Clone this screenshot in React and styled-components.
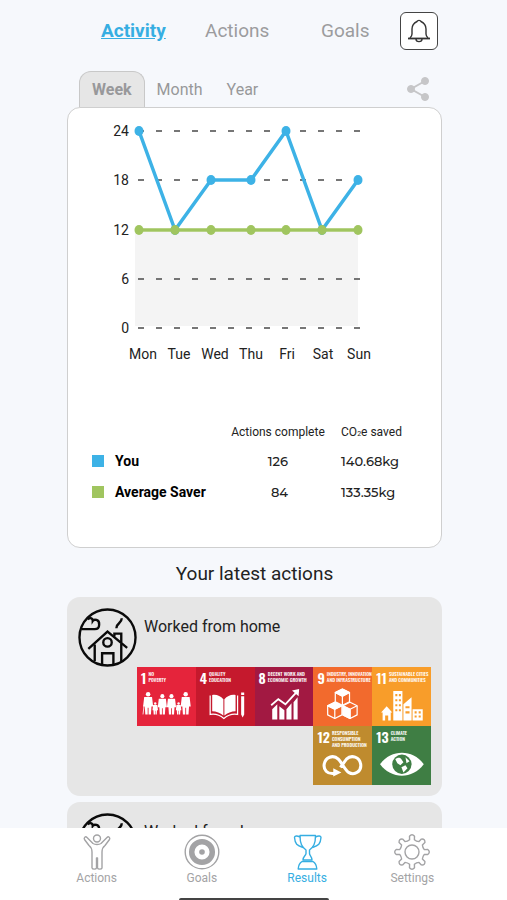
import { useState } from "react";
import styled, { createGlobalStyle } from "styled-components";

const days = ["Mon", "Tue", "Wed", "Thu", "Fri", "Sat", "Sun"];
const dayX = [51, 87, 123, 163, 198, 234, 270];
const levels = [24, 18, 12, 6, 0];

const you = [24, 12, 18, 18, 24, 12, 18];
const average = [12, 12, 12, 12, 12, 12, 12];

const goals = [
  { id: 1, color: "#e5243b", lines: ["NO", "POVERTY"], icon: <PovertyIcon /> },
  { id: 4, color: "#c5192d", lines: ["QUALITY", "EDUCATION"], icon: <BookIcon /> },
  { id: 8, color: "#a21942", lines: ["DECENT WORK AND", "ECONOMIC GROWTH"], icon: <GrowthIcon /> },
  { id: 9, color: "#f26a2d", lines: ["INDUSTRY, INNOVATION", "AND INFRASTRUCTURE"], icon: <CubesIcon /> },
  { id: 11, color: "#f89d2a", lines: ["SUSTAINABLE CITIES", "AND COMMUNITIES"], icon: <CityIcon /> },
  { id: 12, color: "#bf8b2e", lines: ["RESPONSIBLE", "CONSUMPTION", "AND PRODUCTION"], icon: <LoopIcon /> },
  { id: 13, color: "#3f7e44", lines: ["CLIMATE", "ACTION"], icon: <EyeIcon /> },
];

const actions = [
  { id: 1, title: "Worked from home", goals },
  { id: 2, title: "Worked from home", goals: [] },
];

const valueY = (value) => 205 - Math.round(value * 8.2);

function Series({ values, color }) {
  const points = values.map((v, i) => `${dayX[i]},${valueY(v)}`).join(" ");

  return (
    <g>
      <polyline points={points} fill="none" stroke={color} strokeWidth="3.5" strokeLinejoin="round" />
      {values.map((v, i) => (
        <ellipse key={i} cx={dayX[i]} cy={valueY(v)} rx="4.5" ry="5" fill={color} />
      ))}
    </g>
  );
}

function Chart() {
  return (
    <ChartSvg viewBox="0 0 290 242" role="img" aria-label="Actions this week">
      <rect x="47" y="109" width="223" height="94" fill="#f4f4f4" />
      {levels.map((level) => (
        <g key={level}>
          <line x1="50" x2="273" y1={valueY(level)} y2={valueY(level)} stroke="#4a4a4a" strokeWidth="1.6" strokeDasharray="6 12" />
          <AxisText x="41" y={valueY(level) + 5} textAnchor="end">{level}</AxisText>
        </g>
      ))}
      <Series values={you} color="#3db2e6" />
      <Series values={average} color="#a0c55f" />
      {days.map((day, i) => (
        <AxisText key={day} x={55 + i * 36} y="236" textAnchor="middle">{day}</AxisText>
      ))}
    </ChartSvg>
  );
}

function ActionCard({ action }) {
  return (
    <Action>
      <ActionHead>
        <HomeIcon />
        <ActionTitle>{action.title}</ActionTitle>
      </ActionHead>
      <GoalTiles>
        {action.goals.map((goal) => (
          <GoalTile key={goal.id} $color={goal.color}>
            <GoalHead>
              <GoalNumber>{goal.id}</GoalNumber>
              <GoalName>
                {goal.lines.map((line) => (
                  <div key={line}>{line}</div>
                ))}
              </GoalName>
            </GoalHead>
            {goal.icon}
          </GoalTile>
        ))}
      </GoalTiles>
    </Action>
  );
}

const navItems = [
  { name: "Actions", icon: <PersonIcon /> },
  { name: "Goals", icon: <TargetIcon /> },
  { name: "Results", icon: <TrophyIcon /> },
  { name: "Settings", icon: <GearIcon /> },
];

function App() {
  const [section, setSection] = useState("Activity");
  const [period, setPeriod] = useState("Week");

  return (
    <Screen>
      <GlobalStyle />
      <Content>
        <TopBar>
          {["Activity", "Actions", "Goals"].map((name) => (
            <SectionButton key={name} $active={section === name} onClick={() => setSection(name)}>
              {name}
            </SectionButton>
          ))}
          <BellButton aria-label="Notifications">
            <BellIcon />
          </BellButton>
        </TopBar>

        <PeriodBar>
          {["Week", "Month", "Year"].map((name) => (
            <PeriodButton key={name} $active={period === name} onClick={() => setPeriod(name)}>
              {name}
            </PeriodButton>
          ))}
          <ShareButton aria-label="Share">
            <ShareIcon />
          </ShareButton>
        </PeriodBar>

        <ChartCard>
          <Chart />
          <Summary>
            <thead>
              <tr>
                <NameCell as="td" />
                <CountHead>Actions complete</CountHead>
                <HeadCell>CO<SmallTwo>2</SmallTwo>e saved</HeadCell>
              </tr>
            </thead>
            <tbody>
              <tr>
                <NameCell scope="row"><Legend><Swatch $color="#3db2e6" />You</Legend></NameCell>
                <CountCell>126</CountCell>
                <ValueCell>140.68kg</ValueCell>
              </tr>
              <tr>
                <NameCell scope="row"><Legend><Swatch $color="#a0c55f" />Average Saver</Legend></NameCell>
                <CountCell>84</CountCell>
                <ValueCell>133.35kg</ValueCell>
              </tr>
            </tbody>
          </Summary>
        </ChartCard>

        <Heading>Your latest actions</Heading>
        <ActionList>
          {actions.map((action) => (
            <ActionCard key={action.id} action={action} />
          ))}
        </ActionList>
      </Content>

      <BottomNav>
        <NavItems>
          {navItems.map((item) => (
            <NavLink key={item.name} href="#" $active={item.name === "Results"}>
              {item.icon}
              {item.name}
            </NavLink>
          ))}
        </NavItems>
        <HomeIndicator />
      </BottomNav>
    </Screen>
  );
}

export default App;

function BellIcon() {
  return (
    <svg width="26" height="28" viewBox="0 0 26 28" fill="none" stroke="#333" strokeWidth="1.4">
      <path d="M2 21.5H24" strokeWidth="1.8" />
      <path d="M4 21C5 20 6 19 6 17V12C6 8 8 6 11 4.5C11.5 3 14.5 3 15 4.5C18 6 20 8 20 12V17C20 19 21 20 22 21" />
      <path d="M10 22C10 25.5 16 25.5 16 22" />
    </svg>
  );
}

function ShareIcon() {
  return (
    <svg width="24" height="26" viewBox="0 0 24 26" fill="#c6c6c8" stroke="#c6c6c8">
      <path d="M19 5L5 13L19 21" fill="none" strokeWidth="2" />
      <circle cx="19" cy="5" r="3.5" />
      <circle cx="5" cy="13" r="3.5" />
      <circle cx="19" cy="21" r="3.5" />
    </svg>
  );
}

function HomeIcon() {
  return (
    <svg width="59" height="59" viewBox="0 0 60 60" fill="none" stroke="#0a0a0a" strokeWidth="2.4">
      <circle cx="30" cy="30" r="28.5" />
      <path d="M10.5 41.5L30 24L50 40.5" />
      <path d="M17 37V54M44 36V54.5M37 29V26H44V35" />
      <circle cx="30" cy="35" r="4.3" />
      <path d="M24.5 58V46H36V58" />
      <path d="M10 11.5C13 9 15 11 15 13C16 11.5 22 11 21.5 17C21.5 20 20 21.5 17 21.5H4" />
      <path d="M44.5 10.5C44.5 16 39 15 39 20.5" />
    </svg>
  );
}

function PersonIcon() {
  return (
    <NavSvg>
      <circle cx="18" cy="4.5" r="3.5" />
      <path d="M13 34V18C13 15 12 13 10 11.5L5.5 5.5C4.5 3.5 6.5 2 8 3.5L14 9.5C16 10.8 20 10.8 22 9.5L28 3.5C29.5 2 31.5 3.5 30.5 5.5L26 11.5C24 13 23 15 23 18V34C22.5 35.5 19 35.5 18.5 34V24H17.5V34C17 35.5 13.5 35.5 13 34" />
    </NavSvg>
  );
}

function TargetIcon() {
  return (
    <NavSvg>
      <circle cx="18" cy="18" r="16.8" />
      <circle cx="18" cy="18" r="10.3" strokeWidth="5.5" />
      <circle cx="18" cy="18" r="2.8" fill="currentColor" stroke="none" />
    </NavSvg>
  );
}

function TrophyIcon() {
  return (
    <NavSvg>
      <path d="M11 1.5H26.5C26.5 10 24.5 13 20.5 16V19.5C20.5 21.5 23 22.5 23 26H14C14 22.5 17 21.5 17 19.5V16C13 13 11 10 11 1.5Z" />
      <path d="M11 3C8 1.5 5.5 1.8 5.5 3.5C6 10 8 11.5 14 13.5M26.5 3C29.5 1.5 32 1.8 32 3.5C31.5 10 29.5 11.5 23.5 13.5" />
      <path d="M13 27.5H24C26.5 29 27.5 31 27.8 35H9.2C9.5 31 10.5 29 13 27.5Z" />
    </NavSvg>
  );
}

function GearIcon() {
  const polar = (r, deg) => {
    const a = (deg * Math.PI) / 180;
    return `${(18 + r * Math.sin(a)).toFixed(1)} ${(18 - r * Math.cos(a)).toFixed(1)}`;
  };
  const teeth = Array.from({ length: 8 }, (_, i) => {
    const a = i * 45;
    return `${polar(12.5, a - 11)} L${polar(16, a - 9)} Q${polar(18.8, a)} ${polar(16, a + 9)} L${polar(12.5, a + 11)} Q${polar(11.5, a + 22)}`;
  });

  return (
    <NavSvg>
      <path d={`M${teeth.join(" ")} ${polar(12.5, -11)} Z`} />
      <circle cx="18" cy="18" r="7" />
    </NavSvg>
  );
}

function PovertyIcon() {
  const people = [[11, 1.1], [18, 0.6], [25, 1], [34, 1], [41, 0.6], [48, 1.1]];

  return (
    <TileSvg>
      {people.map(([x, s]) => (
        <g key={x} transform={`translate(${x} 46) scale(${s})`}>
          <circle cx="0" cy="-18" r="2" />
          <path d="M-3.5 -15.5H3.5L4.5 -7H3L2.5 0H0.4V-6H-0.4V0H-2.5L-3 -7H-4.5Z" />
        </g>
      ))}
      <path d="M7 37L6 46" stroke="#fff" strokeWidth="0.8" />
    </TileSvg>
  );
}

function BookIcon() {
  return (
    <TileSvg>
      <path d="M16 27C20 26 24 28 27 31V47C24 45 20 43 16 43Z" />
      <path d="M39 27C35 26 31 28 28 31V47C31 45 35 43 39 43Z" />
      <path d="M14 27.5V46C19 45 24 47 27.5 50C31 47 36 45 41 46V27.5" fill="none" stroke="#fff" strokeWidth="1.2" />
      <path d="M44.5 28H47.5V46L46 49L44.5 46ZM44.5 24.5H47.5V27H44.5Z" />
    </TileSvg>
  );
}

function GrowthIcon() {
  return (
    <TileSvg>
      <path d="M17 41L22 36V51H17ZM24 38L29 42V51H24ZM31 41L36 35V51H31ZM38 34L42 29V51H38Z" />
      <path d="M16 37L23 31L30 36L41 24" fill="none" stroke="#fff" strokeWidth="1.8" />
      <path d="M36.5 22.5L43.5 21L43 28Z" />
    </TileSvg>
  );
}

function CubesIcon() {
  return (
    <TileSvg>
      {[[29, 29], [21.5, 42], [36.5, 42]].map(([x, y], i) => (
        <g key={x} transform={`translate(${x} ${y})`} stroke="#fff" strokeWidth="1.2" strokeLinejoin="round">
          <path d="M0 -8L7 -4.5V4.5L0 8L-7 4.5V-4.5Z" fill="none" />
          <path d="M-7 -4.5L0 -1L7 -4.5M0 -1V8" fill="none" />
          {i < 2 && <path d="M0 -8L7 -4.5L0 -1L-7 -4.5Z" />}
          {i === 2 && <path d="M0 -1L-7 -4.5V4.5L0 8Z" />}
        </g>
      ))}
    </TileSvg>
  );
}

function CityIcon() {
  return (
    <TileSvg>
      <path d="M9 44L14.5 38L20 44H18.5V52H16V47H13V52H10.5V44Z" />
      <path fillRule="evenodd" d="M21 23H30V52H21ZM23 26V28H25V26ZM26.5 26V28H28.5V26ZM23 31V33H25V31ZM26.5 31V33H28.5V31ZM23 36V38H25V36ZM26.5 36V38H28.5V36ZM23 41V43H25V41ZM26.5 41V43H28.5V41Z" />
      <path fillRule="evenodd" d="M31 36L39 29V52H31ZM33 38V40H37V38ZM33 43V45H37V43Z" />
      <path fillRule="evenodd" d="M40 41H50V52H40ZM42 43V45H44V43ZM46 43V45H48V43ZM42 47V49H44V47ZM46 47V49H48V47Z" />
    </TileSvg>
  );
}

function LoopIcon() {
  return (
    <TileSvg>
      <path d="M21 46C13.5 47 10.5 42 11 37.5C12 30 20 27 25 32C29 36 31 42 35 45C41 48.5 48 44 47 37C46 30 38 27 33 32L27 40" fill="none" stroke="#fff" strokeWidth="3" />
      <path d="M20 41L28 45L20 49Z" />
    </TileSvg>
  );
}

function EyeIcon() {
  return (
    <TileSvg>
      <path d="M8 37C19 22 40 22 51 37C40 52 19 52 8 37Z" />
      <circle cx="29.5" cy="37" r="9.5" fill="#3f7e44" />
      <path d="M23 32C25 30 28 30 29 32L31 35L28 38L25 36ZM33 30L37 34L34 36ZM29 40L33 38L35 41L31 45Z" />
    </TileSvg>
  );
}

function NavSvg({ children }) {
  return (
    <svg width="36" height="36" viewBox="0 0 36 36" fill="none" stroke="currentColor" strokeWidth="1.4" strokeLinejoin="round">
      {children}
    </svg>
  );
}

function TileSvg({ children }) {
  return (
    <TileDrawing viewBox="4 20 50 34" fill="#fff">
      {children}
    </TileDrawing>
  );
}

const GlobalStyle = createGlobalStyle`
  * {
    box-sizing: border-box;
  }

  body {
    margin: 0;
    background: #f6f8fc;
    color: #222;
    font-family: Roboto, "Liberation Sans", sans-serif;
  }

  button {
    border: 0;
    padding: 0;
    background: none;
    font: inherit;
    cursor: pointer;
  }

  svg {
    display: block;
  }
`;

const Screen = styled.div`
  display: flex;
  flex-direction: column;
  height: 100vh;
`;

const Content = styled.main`
  flex: 1;
  min-height: 0;
  overflow-y: auto;
  scrollbar-width: none;
  padding: 12px 65px 0 67px;
`;

const TopBar = styled.nav`
  display: grid;
  grid-template-columns: 104fr 116fr 79fr 38px;
  align-items: center;
  padding: 0 4px 0 34px;
`;

const SectionButton = styled.button`
  color: ${(props) => (props.$active ? "#36aee2" : "#9c9c9e")};
  font-size: 19px;
  font-weight: ${(props) => (props.$active ? 700 : 400)};
  line-height: 24px;
  text-align: left;
  text-decoration: ${(props) => (props.$active ? "underline" : "none")};
`;

const BellButton = styled.button`
  display: flex;
  align-items: center;
  justify-content: center;
  height: 38px;
  border: 1px solid #444;
  border-radius: 6px;
  background: #fff;
`;

const PeriodBar = styled.div`
  display: flex;
  align-items: stretch;
  height: 36px;
  margin-top: 21px;
  padding: 0 12px;
`;

const PeriodButton = styled.button`
  padding: 0 ${(props) => (props.$active ? "12px" : "11px")};
  border: 1px solid ${(props) => (props.$active ? "#c8c8c8" : "transparent")};
  border-bottom: 0;
  border-radius: 12px 12px 0 0;
  background: ${(props) => (props.$active ? "#e6e6e6" : "transparent")};
  color: #98989a;
  font-size: 16px;
  font-weight: ${(props) => (props.$active ? 700 : 400)};
`;

const ShareButton = styled.button`
  display: flex;
  align-items: center;
  margin-left: auto;
`;

const ChartCard = styled.section`
  padding: 15px 20px 40px;
  border: 1px solid #cfcfcf;
  border-radius: 13px;
  background: #fff;
`;

const ChartSvg = styled.svg`
  width: 290px;
  max-width: 100%;
  height: auto;
  margin-bottom: 54px;
`;

const AxisText = styled.text`
  fill: #222;
  font-size: 14px;
`;

const Summary = styled.table`
  width: 100%;
  table-layout: fixed;
  border-collapse: collapse;

  td,
  th {
    height: 31px;
    padding: 0;
    text-align: left;
    white-space: nowrap;
  }

  thead td,
  thead th {
    height: 26px;
  }
`;

const NameCell = styled.th`
  width: 43%;
  font-size: 14px;
  font-weight: 700;
  color: #000;
`;

const HeadCell = styled.th`
  font-size: 12px;
  font-weight: 400;
`;

const CountHead = styled(HeadCell)`
  width: 33%;
`;

const SmallTwo = styled.span`
  font-size: 7px;
`;

const Legend = styled.span`
  display: flex;
  align-items: center;
  gap: 11px;
  padding-left: 4px;
`;

const Swatch = styled.span`
  width: 12px;
  height: 12px;
  background: ${(props) => props.$color};
`;

const ValueCell = styled.td`
  font-family: Montserrat, Inter, sans-serif;
  font-size: 13px;
  font-weight: 500;
`;

const CountCell = styled(ValueCell)`
  && {
    padding-right: 53px;
    text-align: right;
  }
`;

const Heading = styled.h2`
  margin: 14px 0 11px;
  font-size: 19px;
  font-weight: 400;
  line-height: 24px;
  text-align: center;
`;

const ActionList = styled.div`
  display: flex;
  flex-direction: column;
  gap: 6px;
`;

const Action = styled.article`
  padding: 11px;
  border-radius: 13px;
  background: #e6e6e6;
`;

const ActionHead = styled.div`
  display: flex;
  gap: 7px;
`;

const ActionTitle = styled.h3`
  margin: 7px 0 0;
  font-size: 16px;
  font-weight: 400;
  line-height: 24px;
`;

const GoalTiles = styled.div`
  display: flex;
  flex-wrap: wrap;
  justify-content: flex-end;
  margin-left: 59px;
`;

const GoalTile = styled.div`
  display: flex;
  flex: 0 0 20%;
  flex-direction: column;
  justify-content: space-between;
  min-width: 0;
  aspect-ratio: 1;
  padding: 3px 4px;
  background: ${(props) => props.$color};
  color: #fff;
`;

const GoalHead = styled.div`
  display: flex;
  gap: 2px;
  height: 16px;
`;

const GoalNumber = styled.span`
  font-family: "Oswald", "Roboto Condensed", Roboto, sans-serif;
  font-size: 14px;
  font-weight: 600;
  line-height: 16px;
`;

const GoalName = styled.div`
  padding-top: 1px;
  font-family: "Oswald", "Roboto Condensed", Roboto, sans-serif;
  font-size: 5px;
  font-weight: 500;
  line-height: 6px;
  white-space: nowrap;
`;

const TileDrawing = styled.svg`
  width: 100%;
`;

const BottomNav = styled.footer`
  padding-top: 6px;
  background: #fff;
`;

const NavItems = styled.nav`
  display: grid;
  grid-template-columns: repeat(4, 1fr);
  padding: 0 42px 0 44px;
`;

const NavLink = styled.a`
  display: flex;
  flex-direction: column;
  align-items: center;
  color: ${(props) => (props.$active ? "#36aee2" : "#a3a3a5")};
  font-size: 12px;
  line-height: 16px;
  text-decoration: none;
`;

const HomeIndicator = styled.div`
  width: 150px;
  height: 2px;
  margin: 12px auto 0;
  border-radius: 2px 2px 0 0;
  background: #444;
`;
